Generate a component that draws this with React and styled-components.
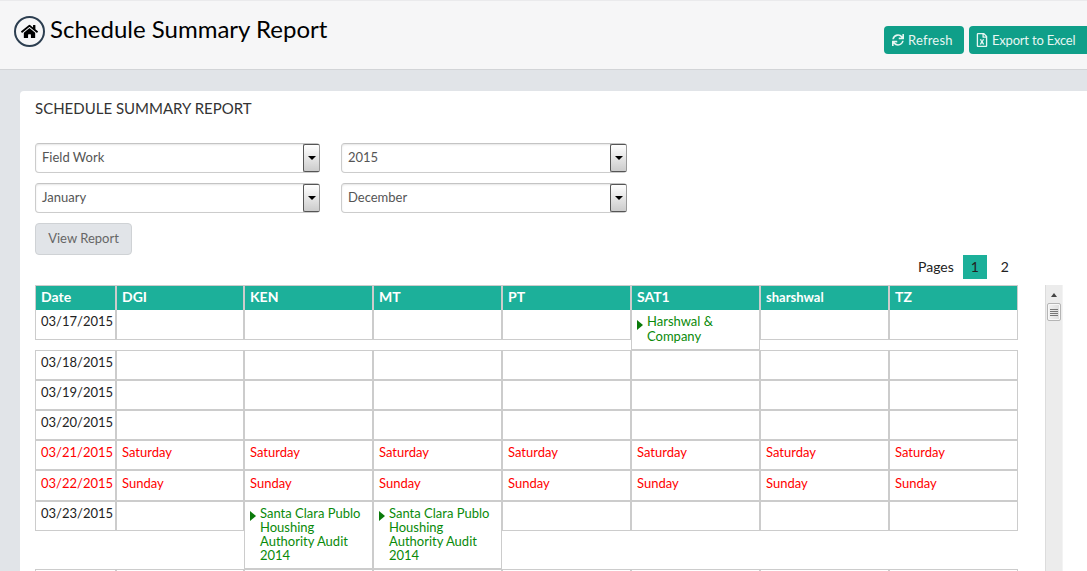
import React from "react";
import styled, { createGlobalStyle } from "styled-components";
import { FaHome, FaSync, FaRegFileExcel } from "react-icons/fa";

const Global = createGlobalStyle`
  html, body { margin: 0; padding: 0; height: 571px; overflow: hidden; background: #e1e4e8; }
  * { box-sizing: border-box; }
  body { font-family: Lato, "Liberation Sans", sans-serif; font-size: 14px; color: #222; }
`;

const Page = styled.div`
  height: 571px;
  overflow: hidden;
  display: flex;
  flex-direction: column;
`;

const Header = styled.header`
  flex: none;
  height: 70px;
  background: #f6f6f7;
  border-top: 1px solid #eaeaec;
  border-bottom: 1px solid #d2d4d7;
  display: flex;
  justify-content: space-between;
  padding-left: 14px;
`;

const TitleGroup = styled.div`
  display: flex;
  align-items: flex-start;
  gap: 5px;
  padding-top: 15px;
`;

const HomeBadge = styled.div`
  width: 31px;
  height: 31px;
  border-radius: 50%;
  border: 2px solid #2c3e50;
  display: flex;
  align-items: center;
  justify-content: center;
  color: #000;
  font-size: 17px;
`;

const Title = styled.h1`
  margin: -2px 0 0;
  font-weight: 400;
  font-size: 24px;
  line-height: 29px;
  color: #000;
`;

const Actions = styled.div`
  display: flex;
  gap: 5px;
  padding-top: 25px;
  margin-right: -3px;
`;

const ActionButton = styled.button`
  height: 28px;
  width: ${(p) => p.$w}px;
  border: none;
  border-radius: 4px;
  background: #0f9f89;
  color: #e8f6f3;
  font: 400 13px Lato, sans-serif;
  letter-spacing: ${(p) => p.$track}px;
  display: flex;
  align-items: center;
  gap: ${(p) => p.$gap}px;
  padding: 0 0 0 ${(p) => p.$pad}px;
  white-space: nowrap;
  svg { font-size: ${(p) => p.$icon}px; flex: none; }
`;

const Panel = styled.section`
  flex: 1;
  margin: 21px 0 0 20px;
  background: #fff;
  border-radius: 4px 0 0 0;
  padding: 8px 0 0 15px;
  min-height: 0;
`;

const PanelTitle = styled.h2`
  margin: 0 0 26px;
  font-weight: 400;
  font-size: 15px;
  line-height: 18px;
  color: #333;
`;

const FilterGrid = styled.div`
  display: grid;
  grid-template-columns: 285px 286px;
  column-gap: 21px;
  row-gap: 10px;
  width: max-content;
`;

const SelectBox = styled.div`
  height: 30px;
  border: 1px solid #ccc;
  border-top-color: #c4c4c4;
  border-radius: 4px;
  box-shadow: inset 0 1px 2px rgba(0, 0, 0, 0.1);
  background: #fff;
  color: #555;
  font-size: 13px;
  display: flex;
  align-items: center;
  justify-content: space-between;
  padding: 0 0 0 6px;
  line-height: 26px;
`;

const SelectLabel = styled.span`
  margin-top: -2px;
`;

const SelectArrow = styled.span`
  flex: none;
  width: 17px;
  height: 28px;
  margin-right: -1px;
  border: 1px solid #555;
  border-right-color: #999;
  border-radius: 2px;
  background: linear-gradient(#fff, #ccc);
  display: flex;
  align-items: center;
  justify-content: center;
  &::after {
    content: "";
    border-left: 4px solid transparent;
    border-right: 4px solid transparent;
    border-top: 4px solid #000;
  }
`;

const ViewButton = styled.button`
  display: block;
  margin-top: 10px;
  width: 97px;
  height: 32px;
  border: 1px solid #cfd2d5;
  border-radius: 4px;
  background: #e1e4e8;
  color: #666;
  font: 400 13px Lato, sans-serif;
  padding: 0 0 2px;
`;

const Pager = styled.div`
  height: 30px;
  display: flex;
  align-items: flex-start;
  padding-left: 883px;
  font-size: 14px;
  color: #222;
`;

const PagerLabel = styled.span`
  flex: none;
  line-height: 24px;
  margin-right: 9px;
`;

const PageNumber = styled.span`
  flex: none;
  width: 24px;
  height: 24px;
  line-height: 24px;
  text-align: center;
  background: ${(p) => (p.$active ? "#1cb09a" : "transparent")};
  margin-right: 6px;
`;

const TableArea = styled.div`
  display: flex;
  align-items: flex-start;
`;

const Table = styled.div`
  width: 983px;
  flex: none;
`;

const Row = styled.div`
  display: flex;
  align-items: flex-start;
`;

const Cell = styled.div`
  flex: none;
  width: ${(p) => p.$w}px;
  min-height: ${(p) => p.$h || 30}px;
  border: 1px solid #ccc;
  border-top-width: ${(p) => (p.$flush ? 0 : 1)}px;
  padding: ${(p) => p.$pt || 4}px 5px 3px 5px;
  font-size: 13px;
  line-height: 15px;
  color: ${(p) => (p.$red ? "#f00" : "#222")};
`;

const HeadCell = styled.div`
  flex: none;
  width: ${(p) => p.$w}px;
  height: 25px;
  background: #1cb09a;
  border: 1px solid #ccc;
  border-bottom-width: 0;
  color: #fff;
  font-weight: 700;
  font-size: ${(p) => (p.$small ? 13 : 14)}px;
  line-height: 22px;
  padding-left: 5px;
`;

const Entry = styled.div`
  position: relative;
  color: #0a8a0a;
  padding: 0 0 ${(p) => p.$pb}px 10px;
  line-height: ${(p) => p.$lh}px;
  &::before {
    content: "";
    position: absolute;
    left: 0;
    top: ${(p) => p.$lh - 9}px;
    border-top: 5px solid transparent;
    border-bottom: 5px solid transparent;
    border-left: 6px solid #0a7a0a;
  }
`;

const Scrollbar = styled.div`
  flex: none;
  width: 18px;
  height: 300px;
  margin-left: 27px;
  background: #ececec;
  border-left: 1px solid #dcdcdc;
  border-right: 1px solid #f3f3f3;
  padding-top: 5px;
`;

const ScrollUp = styled.div`
  width: 0;
  height: 0;
  margin: 3px auto 6px;
  border-left: 3.5px solid transparent;
  border-right: 3.5px solid transparent;
  border-bottom: 4px solid #444;
`;

const ScrollThumb = styled.div`
  width: 14px;
  height: 18px;
  margin: 0 auto;
  border: 1px solid #b5b5b5;
  border-radius: 2px;
  background: linear-gradient(90deg, #f2f2f2, #ddd);
  box-shadow: inset 0 0 0 1px #f8f8f8;
  display: flex;
  flex-direction: column;
  justify-content: center;
  gap: 1px;
  padding: 0 2px;
  span { height: 1px; background: #777; display: block; }
`;

const columns = [
  { name: "DGI", w: 128 },
  { name: "KEN", w: 129 },
  { name: "MT", w: 129 },
  { name: "PT", w: 129 },
  { name: "SAT1", w: 129 },
  { name: "sharshwal", w: 129 },
  { name: "TZ", w: 129 },
];
const AUDIT = "Santa Clara Publo Houshing Authority Audit 2014";

const rows = [
  { date: "03/17/2015", flush: true, lh: 15, pb: 2, entries: { SAT1: "Harshwal & Company" } },
  { date: "03/18/2015" },
  { date: "03/19/2015" },
  { date: "03/20/2015" },
  { date: "03/21/2015", red: "Saturday" },
  { date: "03/22/2015", red: "Sunday", h: 31, pt: 5 },
  { date: "03/23/2015", lh: 14, pb: 3, entries: { KEN: AUDIT, MT: AUDIT } },
  { date: "" },
];

export default function App() {
  return (
    <Page>
      <Global />
      <Header>
        <TitleGroup>
          <HomeBadge><FaHome /></HomeBadge>
          <Title>Schedule Summary Report</Title>
        </TitleGroup>
        <Actions>
          <ActionButton $w={80} $pad={8} $gap={4} $icon={12} $track={0.2}><FaSync />Refresh</ActionButton>
          <ActionButton $w={121} $pad={6} $gap={3} $icon={14} $track={-0.2}><FaRegFileExcel />Export to Excel</ActionButton>
        </Actions>
      </Header>
      <Panel>
        <PanelTitle>SCHEDULE SUMMARY REPORT</PanelTitle>
        <FilterGrid>
          <SelectBox><SelectLabel>Field Work</SelectLabel><SelectArrow /></SelectBox>
          <SelectBox><SelectLabel>2015</SelectLabel><SelectArrow /></SelectBox>
          <SelectBox><SelectLabel>January</SelectLabel><SelectArrow /></SelectBox>
          <SelectBox><SelectLabel>December</SelectLabel><SelectArrow /></SelectBox>
        </FilterGrid>
        <ViewButton>View Report</ViewButton>
        <Pager>
          <PagerLabel>Pages</PagerLabel>
          <PageNumber $active>1</PageNumber>
          <PageNumber>2</PageNumber>
        </Pager>
        <TableArea>
          <Table>
            <Row>
              <HeadCell $w={81}>Date</HeadCell>
              {columns.map((c) => (
                <HeadCell key={c.name} $w={c.w} $small={c.name === "sharshwal"}>{c.name}</HeadCell>
              ))}
            </Row>
            {rows.map((r, i) => (
              <Row key={i}>
                <Cell $w={81} $red={!!r.red} $h={r.h} $pt={r.pt} $flush={r.flush}>{r.date}</Cell>
                {columns.map((c) => (
                  <Cell key={c.name} $w={c.w} $red={!!r.red} $h={r.h} $pt={r.pt} $flush={r.flush}>
                    {r.red}
                    {r.entries && r.entries[c.name] && (
                      <Entry $lh={r.lh} $pb={r.pb}>{r.entries[c.name]}</Entry>
                    )}
                  </Cell>
                ))}
              </Row>
            ))}
          </Table>
          <Scrollbar>
            <ScrollUp />
            <ScrollThumb><span /><span /><span /><span /></ScrollThumb>
          </Scrollbar>
        </TableArea>
      </Panel>
    </Page>
  );
}
